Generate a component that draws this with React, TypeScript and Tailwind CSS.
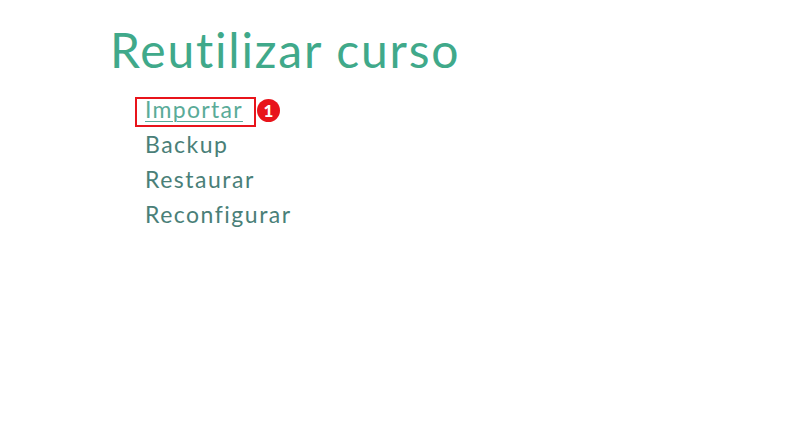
const links = ["Importar", "Backup", "Restaurar", "Reconfigurar"];

export default function App() {
  return (
    <div
      className="w-[800px] h-[436px] bg-white"
      style={{ fontFamily: '"Century Gothic", Lato, "Noto Sans", sans-serif' }}
    >
      <div className="pl-[110px] pt-[24px]">
        <h1 className="text-[48px] leading-[52px] text-[#40a98a] tracking-[1.8px]">
          Reutilizar curso
        </h1>
        <ul className="mt-[16px] pl-[35px] flex flex-col">
          {links.map((l, i) => (
            <li key={l} className="relative h-[35px] flex items-center">
              {i === 0 ? (
                <>
                  <a className="text-[23px] tracking-[1.3px] text-[#5aab98] underline underline-offset-[3px] decoration-1">
                    {l}
                  </a>
                  <span className="absolute -left-[10px] top-[5px] w-[121px] h-[30px] border-2 border-[#e8141b]" />
                  <span className="absolute left-[112px] top-[7px] w-[23px] h-[23px] rounded-full bg-[#e8141b] text-white text-[17px] font-black flex items-center justify-center leading-none">
                    1
                  </span>
                </>
              ) : (
                <a className="text-[23px] tracking-[1.5px] text-[#4a7f78]">{l}</a>
              )}
            </li>
          ))}
        </ul>
      </div>
    </div>
  );
}
